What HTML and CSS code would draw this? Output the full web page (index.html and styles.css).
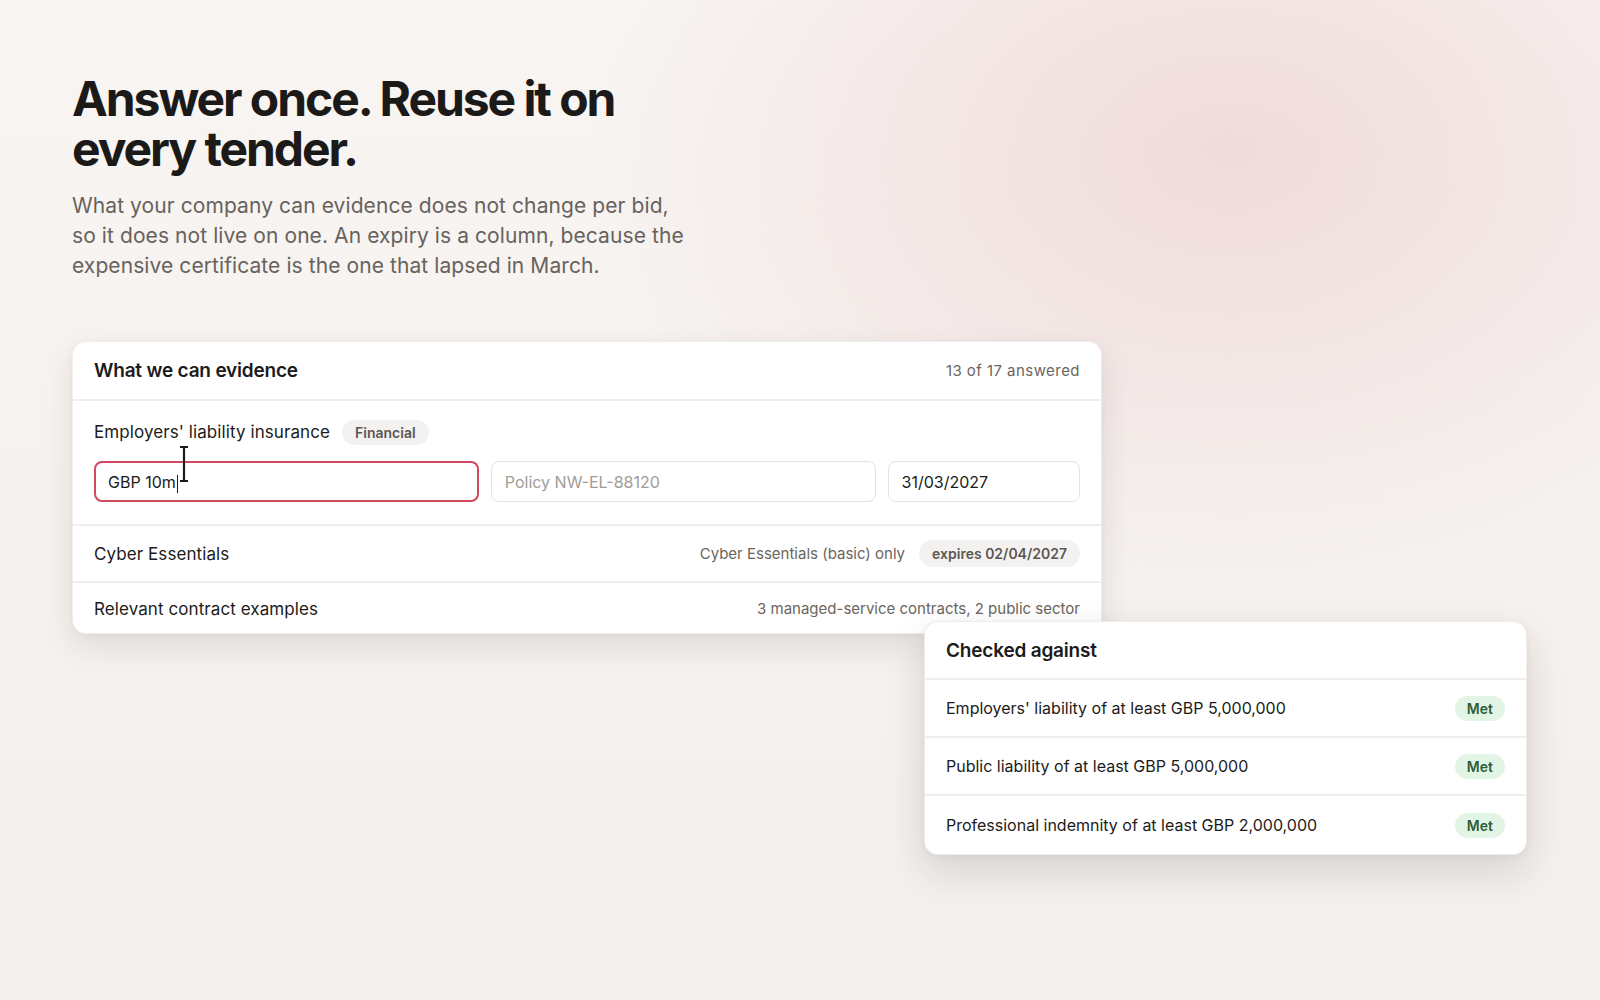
FILE: index.html
```html
<!DOCTYPE html>
<html lang="en">
<head>
<meta charset="utf-8">
<title>Answer once. Reuse it on every tender.</title>
<link rel="stylesheet" href="styles.css">
</head>
<body>
<main class="page">
  <section class="intro">
    <h1 class="title">Answer once. Reuse it on every tender.</h1>
    <p class="lede">What your company can evidence does not change per bid, so it does not live on one. An expiry is a column, because the expensive certificate is the one that lapsed in March.</p>
  </section>

  <section class="stage">
    <div class="card evidence">
      <div class="card-head">
        <h2 class="card-title">What we can evidence</h2>
        <span class="muted count">13 of 17 answered</span>
      </div>
      <div class="row row-edit">
        <div class="row-label">
          <span class="label label-lg">Employers' liability insurance</span>
          <span class="pill pill-grey">Financial</span>
        </div>
        <div class="fields">
          <div class="field field-focus"><span class="value">GBP 10m</span><span class="caret"></span>
            <svg class="ibeam" width="10" height="36" viewBox="0 0 10 36" aria-hidden="true">
              <path d="M1 1h8M1 35h8M5 1v34" stroke="#1c1b1a" stroke-width="2.2" fill="none"/>
            </svg>
          </div>
          <div class="field"><span class="placeholder">Policy NW-EL-88120</span></div>
          <div class="field"><span class="value">31/03/2027</span></div>
        </div>
      </div>
      <div class="row row-line">
        <span class="label label-lg">Cyber Essentials</span>
        <div class="row-meta">
          <span class="muted">Cyber Essentials (basic) only</span>
          <span class="pill pill-grey pill-lg">expires 02/04/2027</span>
        </div>
      </div>
      <div class="row row-line row-last">
        <span class="label label-lg">Relevant contract examples</span>
        <span class="muted">3 managed-service contracts, 2 public sector</span>
      </div>
    </div>

    <div class="card checks">
      <div class="card-head">
        <h2 class="card-title">Checked against</h2>
      </div>
      <div class="row row-line">
        <span class="label">Employers' liability of at least GBP 5,000,000</span>
        <span class="pill pill-green">Met</span>
      </div>
      <div class="row row-line">
        <span class="label">Public liability of at least GBP 5,000,000</span>
        <span class="pill pill-green">Met</span>
      </div>
      <div class="row row-line">
        <span class="label">Professional indemnity of at least GBP 2,000,000</span>
        <span class="pill pill-green">Met</span>
      </div>
    </div>
  </section>
</main>
</body>
</html>
```

FILE: styles.css
```css
* { box-sizing: border-box; }

html, body {
  margin: 0;
  height: 100%;
}

body {
  font-family: Inter, "Noto Sans", "Liberation Sans", sans-serif;
  color: #1c1b1a;
  background:
    radial-gradient(ellipse 640px 440px at 1230px 150px, rgba(236, 203, 205, 0.6), rgba(236, 205, 206, 0) 100%),
    linear-gradient(180deg, #f8f5f2 0%, #f3efec 100%);
  min-height: 1000px;
  overflow: hidden;
}

.page {
  padding: 74px 72px 0;
}

.intro {
  max-width: 618px;
}

.title {
  margin: 0;
  font-size: 48px;
  line-height: 50px;
  font-weight: 700;
  letter-spacing: -0.043em;
  color: #1b1a18;
}

.lede {
  margin: 17px 0 0;
  font-size: 21px;
  line-height: 30px;
  letter-spacing: 0.004em;
  color: #67625d;
}

.stage {
  position: relative;
  margin-top: 60px;
  height: 520px;
}

.card {
  background: #fff;
  border: 1px solid rgba(30, 20, 10, 0.07);
  border-radius: 14px;
  box-shadow: 0 12px 32px rgba(40, 30, 20, 0.10), 0 2px 6px rgba(40, 30, 20, 0.04);
  overflow: hidden;
}

.evidence {
  width: 1030px;
  height: 293px;
}

.checks {
  position: absolute;
  left: 852px;
  top: 280px;
  width: 603px;
  box-shadow: 0 16px 40px rgba(40, 30, 20, 0.14), 0 2px 6px rgba(40, 30, 20, 0.05);
}

.card-head {
  display: flex;
  align-items: center;
  justify-content: space-between;
  height: 59px;
  padding: 0 21px;
  border-bottom: 2px solid #f0eeec;
}

.checks .card-head { height: 58px; }

.card-title {
  margin: 0;
  font-size: 19px;
  font-weight: 600;
  letter-spacing: -0.01em;
  color: #1c1b1a;
}

.muted {
  font-size: 15px;
  color: #6a6560;
}

.count { letter-spacing: 0.03em; }

.row {
  padding: 0 21px;
  border-bottom: 2px solid #f0eeec;
}

.row-last { border-bottom: 0; }

.row-edit {
  padding-top: 18px;
  padding-bottom: 22px;
}

.row-label {
  display: flex;
  align-items: center;
  gap: 12px;
  height: 26px;
}

.label {
  font-size: 16px;
  color: #1c1b1a;
}

.label-lg { font-size: 17px; letter-spacing: 0.005em; }

.row-line {
  display: flex;
  align-items: center;
  justify-content: space-between;
  height: 57px;
}

.evidence .row-last { height: 51px; }

.checks .row-line { height: 58px; }
.checks .row-line:last-child { border-bottom: 0; }

.row-meta {
  display: flex;
  align-items: center;
  gap: 14px;
}

.pill {
  display: inline-flex;
  align-items: center;
  height: 25px;
  padding: 0 13px;
  border-radius: 999px;
  font-size: 14px;
  font-weight: 600;
}

.pill-grey {
  background: #f4f2f0;
  color: #5c5752;
}

.pill-lg { height: 27px; padding: 0 13px; }

.pill-green {
  background: #e2f5e4;
  color: #2e5e3a;
  height: 25px;
  padding: 0 12px;
}

.fields {
  display: grid;
  grid-template-columns: 2fr 2fr 1fr;
  gap: 12px;
  margin-top: 16px;
}

.field {
  position: relative;
  display: flex;
  align-items: center;
  height: 41px;
  padding: 0 13px;
  border: 1px solid #e4e1de;
  border-radius: 8px;
  font-size: 16px;
  background: #fff;
}

.field-focus {
  border: 2px solid #d2495f;
  padding: 0 12px;
}

.value { color: #1c1b1a; }
.placeholder { color: #a19c97; }

.caret {
  display: inline-block;
  width: 1px;
  height: 18px;
  margin-left: 1px;
  margin-top: 4px;
  background: #1c1b1a;
}

.ibeam {
  position: absolute;
  left: 83px;
  top: -17px;
}
```
